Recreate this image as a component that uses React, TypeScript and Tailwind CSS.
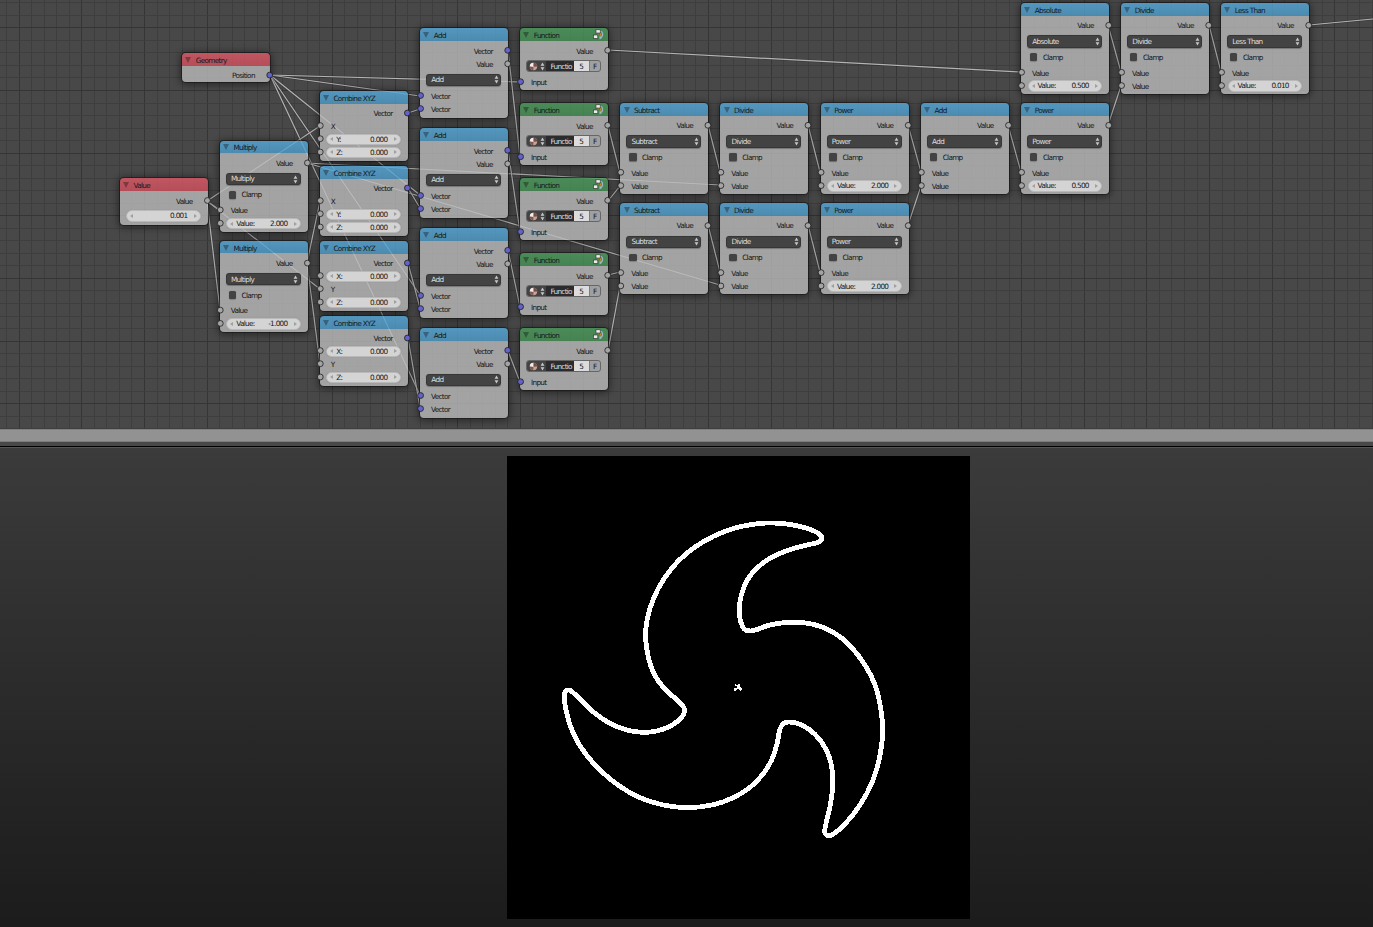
import React from "react";

type Kind = "math" | "combine" | "vadd" | "func" | "geo" | "value";

interface NodeDef {
  kind: Kind;
  x: number;
  y: number;
  title: string;
  field?: string;
  rows?: [string, boolean][];
}

const NODES: NodeDef[] = [
  { kind: "geo", x: 182, y: 53, title: "Geometry" },
  { kind: "value", x: 119.7, y: 178, title: "Value" },
  { kind: "math", x: 219.7, y: 140.6, title: "Multiply", field: "2.000" },
  { kind: "math", x: 219.7, y: 240.8, title: "Multiply", field: "-1.000" },
  { kind: "combine", x: 319.7, y: 91, title: "Combine XYZ", rows: [["X", false], ["Y:", true], ["Z:", true]] },
  { kind: "combine", x: 319.7, y: 166, title: "Combine XYZ", rows: [["X", false], ["Y:", true], ["Z:", true]] },
  { kind: "combine", x: 319.7, y: 241, title: "Combine XYZ", rows: [["X:", true], ["Y", false], ["Z:", true]] },
  { kind: "combine", x: 319.7, y: 316, title: "Combine XYZ", rows: [["X:", true], ["Y", false], ["Z:", true]] },
  { kind: "vadd", x: 420, y: 28, title: "Add" },
  { kind: "vadd", x: 420, y: 128, title: "Add" },
  { kind: "vadd", x: 420, y: 228, title: "Add" },
  { kind: "vadd", x: 420, y: 328, title: "Add" },
  { kind: "func", x: 520, y: 28, title: "Function" },
  { kind: "func", x: 520, y: 103, title: "Function" },
  { kind: "func", x: 520, y: 178, title: "Function" },
  { kind: "func", x: 520, y: 253, title: "Function" },
  { kind: "func", x: 520, y: 328, title: "Function" },
  { kind: "math", x: 620.2, y: 103, title: "Subtract" },
  { kind: "math", x: 620.2, y: 203.3, title: "Subtract" },
  { kind: "math", x: 720.3, y: 103, title: "Divide" },
  { kind: "math", x: 720.3, y: 203.3, title: "Divide" },
  { kind: "math", x: 820.5, y: 103, title: "Power", field: "2.000" },
  { kind: "math", x: 820.5, y: 203.3, title: "Power", field: "2.000" },
  { kind: "math", x: 920.8, y: 103, title: "Add" },
  { kind: "math", x: 1021, y: 103, title: "Power", field: "0.500" },
  { kind: "math", x: 1021, y: 3, title: "Absolute", field: "0.500" },
  { kind: "math", x: 1121, y: 3, title: "Divide" },
  { kind: "math", x: 1221, y: 3, title: "Less Than", field: "0.010" },
];

const WIRES: [number, number, number, number][] = [
  [270, 75, 420, 96], [270, 75, 420, 195], [270, 75, 420, 295], [270, 75, 420, 395], [270, 75, 520, 82],
  [608, 50, 1021, 72],
  [207, 201, 220, 210], [207, 201, 320, 126], [207, 201, 320, 289], [207, 201, 220, 310],
  [307, 163, 720, 185], [307, 163, 720, 285],
  [307, 263, 320, 201], [307, 263, 320, 364],
  [408, 113, 420, 109], [408, 188, 420, 208], [408, 263, 420, 308], [408, 338, 420, 408],
  [508, 50, 520, 157], [508, 150, 520, 232], [508, 250, 520, 307], [508, 351, 520, 382],
  [608, 126, 620, 173], [608, 201, 620, 186], [608, 275, 620, 272], [608, 351, 620, 286],
  [708, 125, 720, 172], [708, 225, 720, 272], [808, 125, 820, 172], [808, 225, 820, 272],
  [908, 125, 921, 172], [908, 225, 921, 186], [1008, 125, 1021, 172],
  [1108, 125, 1121, 86], [1108, 25, 1121, 72], [1209, 25, 1221, 72], [1309, 25, 1373, 19],
];

// [on right side, y offset, is vector]
const SOCKETS: Record<Kind, [boolean, number, boolean][]> = {
  geo: [[true, 21.8, true]],
  value: [[true, 22.2, false]],
  math: [[true, 22, false], [false, 69, false], [false, 82.3, false]],
  combine: [[true, 21.7, true], [false, 34.3, false], [false, 47.4, false], [false, 60.7, false]],
  vadd: [[true, 22, true], [true, 35.5, false], [false, 67.2, true], [false, 80.3, true]],
  func: [[true, 22, false], [false, 53.4, true]],
};

const HEAD: Record<Kind, string> = {
  geo: "bg-linear-to-b from-[rgba(222,90,104,0.8)] to-[rgba(208,80,92,0.8)]",
  value: "bg-linear-to-b from-[rgba(222,90,104,0.8)] to-[rgba(208,80,92,0.8)]",
  math: "bg-linear-to-b from-[rgba(86,170,220,0.8)] to-[rgba(78,156,202,0.8)]",
  combine: "bg-linear-to-b from-[rgba(86,170,220,0.8)] to-[rgba(78,156,202,0.8)]",
  vadd: "bg-linear-to-b from-[rgba(86,170,220,0.8)] to-[rgba(78,156,202,0.8)]",
  func: "bg-linear-to-b from-[rgba(74,156,92,0.8)] to-[rgba(70,145,85,0.8)]",
};

const Out = ({ children }: { children: string }) => (
  <div className="flex h-[13px] items-center justify-end pr-[15.2px] pt-[1.4px]">{children}</div>
);
const In = ({ children }: { children: string }) => (
  <div className="flex h-[13px] items-center pl-[11px] pt-[1.4px]">{children}</div>
);
const Tri = ({ flip }: { flip?: boolean }) => (
  <svg className="h-[4px] w-[3px] shrink-0" viewBox="0 0 3 4">
    <path d={flip ? "M0 0L3 2L0 4Z" : "M3 0L0 2L3 4Z"} fill="#a0a0a0" />
  </svg>
);
const UpDown = () => (
  <svg className="h-[9px] w-[5px] shrink-0" viewBox="0 0 5 9">
    <path d="M2.5 0.4L4.4 3.8H0.6ZM2.5 8.6L4.4 5.2H0.6Z" fill="#c8c8c8" />
  </svg>
);
const Field = ({ label, value }: { label?: string; value: string }) => (
  <div className="flex h-[13px] items-center pl-[6.5px]">
    <div className="flex h-[11.6px] w-[74.5px] items-center rounded-full border-[0.5px] border-[#b9b9b9] bg-[#d4d4d4] pl-[3.2px] pr-[3.2px] shadow-[0_0_1px_#888]">
      <Tri />
      <span className="ml-[2.8px] flex-1 pt-[0.8px]">{label}</span>
      <span className="mr-[6px] pt-[0.8px]">{value}</span>
      <Tri flip />
    </div>
  </div>
);
const Select = ({ children }: { children: string }) => (
  <div className="flex h-[13px] items-center pl-[6px]">
    <div className="flex h-[12.4px] w-[75px] items-center justify-between rounded-[3px] border-[0.5px] border-[#363636] bg-[#434343] pl-[4.3px] pr-[1.5px] text-[#dedede] shadow-[0_0.5px_1px_#777]">
      <span className="pt-[0.8px]">{children}</span>
      <UpDown />
    </div>
  </div>
);

const GroupIcon = () => (
  <svg className="h-[11px] w-[11px]" viewBox="0 0 11 11">
    <path d="M7 2Q9.6 2.4 9.6 5.4Q9.6 8 6.6 9" fill="none" stroke="#9fb6c0" strokeWidth="1.2" />
    <path d="M6.6 6.6V10.6L9 9Z" fill="#9fb6c0" />
    <path d="M5.6 4.4L4.6 5.8M7.6 4.2V6.6" stroke="#d98a2c" strokeWidth="1" />
    <rect x="3" y="0.8" width="4.2" height="3.2" fill="#ececec" stroke="#333" strokeWidth="0.6" />
    <rect x="0.6" y="6" width="4.2" height="3.4" fill="#ececec" stroke="#333" strokeWidth="0.6" />
  </svg>
);

const MaterialIcon = () => (
  <svg className="h-[9px] w-[9px]" viewBox="0 0 9 9">
    <circle cx="4.5" cy="4.5" r="3.7" fill="#c9a396" />
    <path d="M4.5 0.8A3.7 3.7 0 0 0 0.8 4.5L4.5 5Z" fill="#f0eeee" />
    <path d="M4.6 0.8A3.7 3.7 0 0 1 8.2 4.4L4.5 4.8Z" fill="#74504a" />
    <path d="M0.8 4.6A3.7 3.7 0 0 0 4.4 8.2V5Z" fill="#7e5850" />
  </svg>
);

const GraphNode = ({ n }: { n: NodeDef }) => (
  <div
    className="absolute w-[88px] overflow-hidden rounded-[4px] shadow-[0_0_0_1px_rgba(20,20,20,0.6),0_1px_7px_2px_rgba(0,0,0,0.42)]"
    style={{ left: n.x, top: n.y }}
  >
    <div className={`flex h-[12.6px] items-center ${HEAD[n.kind]} pl-[3.4px] text-[#14191d]`}>
      <svg className="mt-[1.2px] h-[6px] w-[6px]" viewBox="0 0 6 6">
        <path d="M0 0H6L3 6Z" fill="#000" fillOpacity="0.32" />
      </svg>
      <span className="ml-[4.4px] flex-1 pt-[2.8px]">{n.title}</span>
      {n.kind === "func" && <div className="mr-[4px] mt-[0.5px]"><GroupIcon /></div>}
    </div>
    <div className="bg-[rgba(186,186,186,0.8)] text-[#161616]">
      {n.kind === "geo" && <div className="pb-[0.4px] pt-[3.5px]"><Out>Position</Out></div>}
      {n.kind === "value" && (
        <div className="pb-[3px] pt-[3.9px]">
          <Out>Value</Out>
          <div className="pt-[1.8px]"><Field value="0.001" /></div>
        </div>
      )}
      {n.kind === "math" && (
        <div className="pb-[1.5px] pt-[3.4px]">
          <Out>Value</Out>
          <div className="pt-[3px]"><Select>{n.title}</Select></div>
          <div className="flex h-[16px] items-center pl-[8.9px] pt-[2.5px]">
            <div className="size-[7.5px] rounded-[1.5px] bg-[#434343] shadow-[0_0.5px_1px_#666]" />
            <span className="ml-[5.5px] pt-[1.2px]">Clamp</span>
          </div>
          <div className="pt-[2.5px]"><In>Value</In></div>
          {n.field ? <Field label="Value:" value={n.field} /> : <In>Value</In>}
        </div>
      )}
      {n.kind === "combine" && (
        <div className="pb-[2px] pt-[3.4px]">
          <Out>Vector</Out>
          {n.rows!.map(([label, field]) => field ? <Field key={label} label={label} value="0.000" /> : <In key={label}>{label}</In>)}
        </div>
      )}
      {n.kind === "vadd" && (
        <div className="pb-[1.8px] pt-[4.2px]">
          <Out>Vector</Out>
          <Out>Value</Out>
          <div className="pb-[3.4px] pt-[2.6px]"><Select>Add</Select></div>
          <In>Vector</In>
          <In>Vector</In>
        </div>
      )}
      {n.kind === "func" && (
        <div className="pb-[1.7px] pt-[4.2px]">
          <Out>Value</Out>
          <div className="mb-[3.2px] ml-[6.2px] mt-[2.1px] flex h-[12.6px] w-[75px] overflow-hidden rounded-[3px] border-[0.5px] border-[#666] bg-[#a0a0a0]">
            <div className="flex w-[19px] items-center justify-center gap-[2px] bg-[#434343]"><MaterialIcon /><UpDown /></div>
            <div className="flex w-[28px] items-center overflow-hidden bg-[#2c2c2c] pl-[4.2px] pt-[1px] text-[#dedede]">Functio</div>
            <div className="flex w-[15px] items-center justify-center bg-[#dcdcdc] pr-[1px] pt-[1px]">5</div>
            <div className="flex flex-1 items-center justify-center border-l border-[#7c7c7c] pr-[1px] pt-[1px]">F</div>
          </div>
          <In>Input</In>
        </div>
      )}
    </div>
  </div>
);

const V_LINES = Array.from({ length: 112 }, (_, i) => i - 12);
const H_LINES = Array.from({ length: 36 }, (_, i) => i - 8);

const SWIRL: [number, number][] = [
  [815, 112], [800, 97], [760, 82], [710, 72], [650, 69], [580, 78], [520, 96], [462, 124], [410, 160], [365, 205],
  [325, 265], [300, 325], [287, 390], [290, 445], [303, 500], [325, 543], [355, 577], [385, 603], [400, 620], [404, 634],
  [395, 652], [365, 676], [325, 692], [280, 697], [230, 690], [180, 670], [135, 640], [100, 608], [75, 583], [60, 571],
  [48, 573], [43, 585], [46, 620], [62, 680], [95, 745], [145, 805], [205, 856], [270, 893], [340, 915], [415, 923],
  [490, 914], [550, 893], [600, 862], [640, 821], [667, 775], [682, 727], [689, 690], [700, 671], [718, 666], [755, 675],
  [795, 703], [828, 748], [845, 800], [848, 860], [840, 920], [830, 962], [824, 995], [834, 1007], [850, 1002], [885, 972],
  [930, 915], [965, 850], [987, 780], [998, 700], [993, 630], [975, 555], [945, 495], [900, 437], [850, 397], [790, 373],
  [720, 367], [660, 375], [620, 389], [600, 393], [583, 387], [572, 365], [568, 330], [574, 285], [592, 240], [620, 205],
  [665, 172], [720, 149], [775, 134], [805, 127],
];

const smooth = (p: [number, number][]) => {
  const n = p.length;
  let d = `M${p[0][0]} ${p[0][1]}`;
  for (let i = 0; i < n; i++) {
    const a = p[(i + n - 1) % n], b = p[i], c = p[(i + 1) % n], e = p[(i + 2) % n];
    d += `C${b[0] + (c[0] - a[0]) / 6} ${b[1] + (c[1] - a[1]) / 6} ${c[0] - (e[0] - b[0]) / 6} ${c[1] - (e[1] - b[1]) / 6} ${c[0]} ${c[1]}`;
  }
  return d + "Z";
};

export default function App() {
  return (
    <div className="flex h-[927px] w-[1373px] flex-col overflow-hidden bg-[#484848] font-['DejaVu_Sans',sans-serif] text-[7.3px] leading-[10px] tracking-[-0.7px] whitespace-nowrap">
      <div className="relative h-[429px] shrink-0 overflow-hidden bg-[#484848]">
        <svg className="absolute inset-0" width="1373" height="429">
          {V_LINES.map((i) => (
            <rect key={`v${i}`} x={Math.round(144 + i * 12.53)} y="0" width="1" height="429" fill={i % 5 === 0 ? "#353535" : "#3e3e3e"} />
          ))}
          {H_LINES.map((i) => (
            <rect key={`h${i}`} x="0" y={Math.round(90 + i * 12.53)} width="1373" height="1" fill={i % 5 === 0 ? "#353535" : "#3e3e3e"} />
          ))}
          {WIRES.map(([a, b, c, d], i) => (
            <g key={i}>
              <line x1={a} y1={b} x2={c} y2={d} stroke="#000" strokeOpacity="0.18" strokeWidth="2.6" />
              <line x1={a} y1={b} x2={c} y2={d} stroke="#b4b4b4" strokeWidth="1.2" />
            </g>
          ))}
        </svg>
        {NODES.map((n, i) => <GraphNode key={i} n={n} />)}
        <svg className="absolute inset-0" width="1373" height="429">
          {NODES.map((n, i) =>
            SOCKETS[n.kind].map(([right, dy, vec], j) => (
              <circle key={`${i}-${j}`} cx={n.x + (right ? 87.7 : 0.6)} cy={n.y + dy + 0.3} r="2.9" fill={vec ? "#6363c7" : "#a4a4a4"} stroke="#1c1c1c" strokeWidth="0.8" />
            )),
          )}
        </svg>
      </div>
      <div className="h-[13px] shrink-0 border-y border-t-[#808080] border-b-[#7c7c7c] bg-[#929292]" />
      <div className="h-[4px] shrink-0 bg-[#484848]" />
      <div className="h-px shrink-0 bg-black" />
      <div className="flex flex-1 justify-center border-t border-[#555] bg-linear-to-b from-[#3b3b3b] to-[#1c1c1c] pl-[104px] pt-[8px]">
        <div className="h-[463px] w-[463px] bg-black pl-[43px] pt-[44px]">
          <svg width="350" height="350" viewBox="0 0 1050 1050" shapeRendering="crispEdges">
            <path d={smooth(SWIRL)} fill="none" stroke="#fff" strokeWidth="14.5" />
            <path d="M555 552H558V555H564V552H570V561H573V564H576V570H573V573H570V570H567V567H561V570H558V573H552V564H561V558H555Z" fill="#fff" />
          </svg>
        </div>
      </div>
    </div>
  );
}
